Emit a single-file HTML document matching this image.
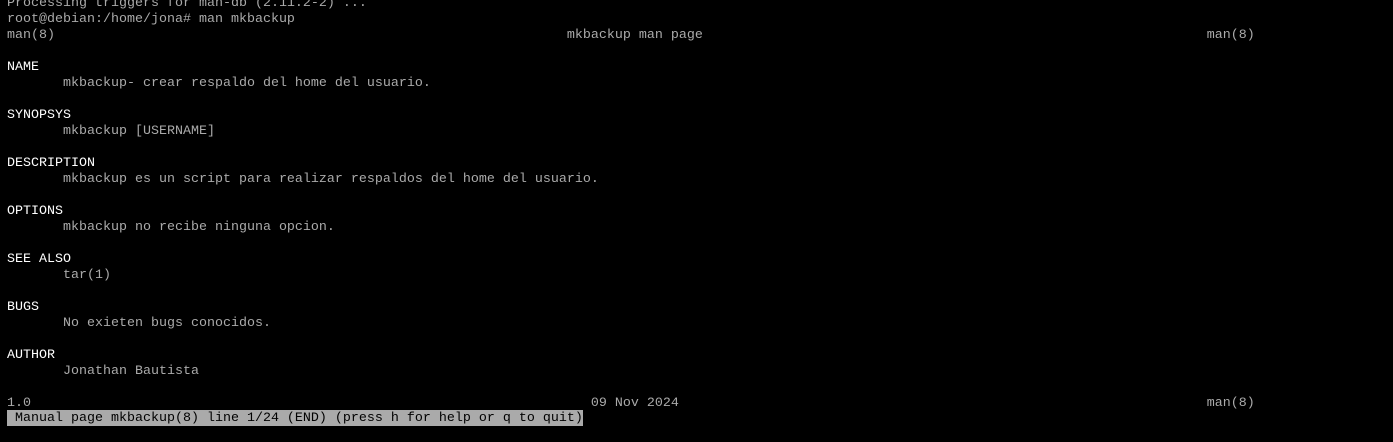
<!DOCTYPE html>
<html><head><style>
html,body{margin:0;padding:0;background:#000;width:1393px;height:442px;overflow:hidden}
pre{position:absolute;left:7px;top:-4px;margin:0;font-family:"Liberation Mono","DejaVu Sans Mono",monospace;font-size:13.333px;line-height:16px;color:#aaa;white-space:pre}
b{color:#fff;font-weight:normal}
.s{display:inline-block;height:16px;vertical-align:top;background:#aaa;color:#000;position:relative;top:-2px;line-height:18px}
</style></head><body>
<pre>Processing triggers for man-db (2.11.2-2) ...
root@debian:/home/jona# man mkbackup
man(8)                                                                mkbackup man page                                                               man(8)

<b>NAME</b>
       mkbackup- crear respaldo del home del usuario.

<b>SYNOPSYS</b>
       mkbackup [USERNAME]

<b>DESCRIPTION</b>
       mkbackup es un script para realizar respaldos del home del usuario.

<b>OPTIONS</b>
       mkbackup no recibe ninguna opcion.

<b>SEE ALSO</b>
       tar(1)

<b>BUGS</b>
       No exieten bugs conocidos.

<b>AUTHOR</b>
       Jonathan Bautista

1.0                                                                      09 Nov 2024                                                                  man(8)
<span class="s"> Manual page mkbackup(8) line 1/24 (END) (press h for help or q to quit)</span></pre>
</body></html>
